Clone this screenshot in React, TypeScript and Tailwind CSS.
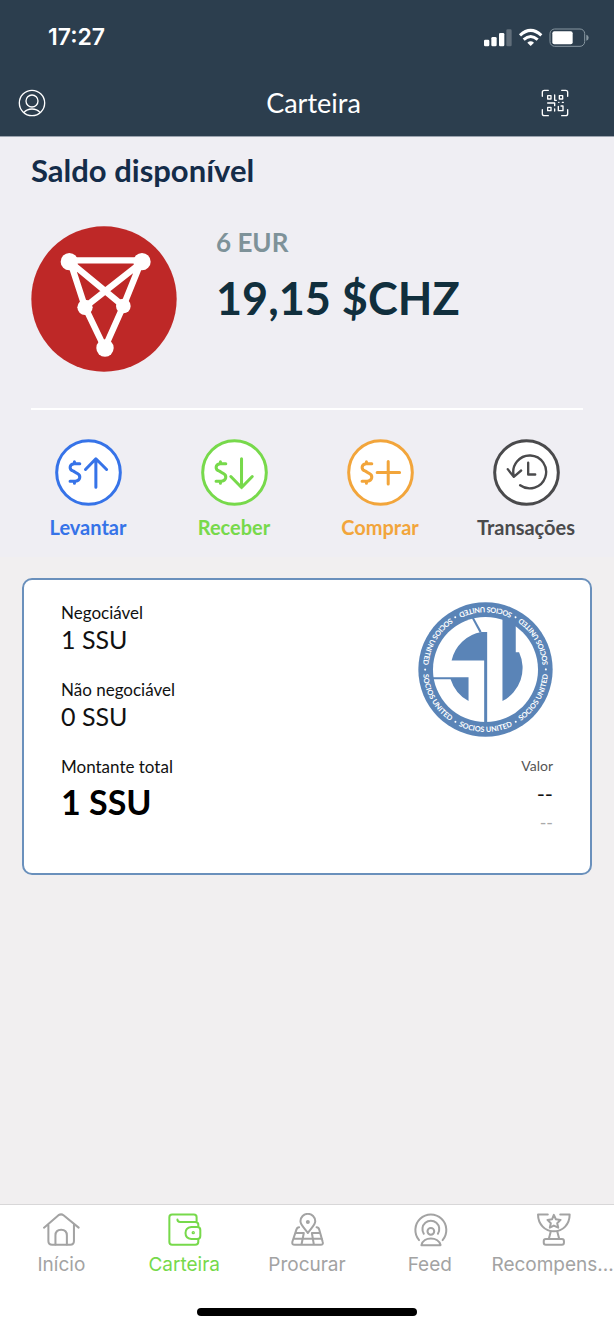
import type { ReactNode } from "react";

const icon = {
  fill: "none",
  stroke: "currentColor",
  strokeLinecap: "round" as const,
  strokeLinejoin: "round" as const,
};

function StatusIcons() {
  return (
    <svg className="h-5 w-[105px]" viewBox="0 0 315 60" aria-hidden="true">
      <g fill="#fff">
        <rect x="0" y="38" width="16" height="20" rx="4" />
        <rect x="22" y="30" width="16" height="28" rx="4" />
        <rect x="45" y="18" width="16" height="40" rx="4" />
        <rect x="67" y="7" width="16" height="51" rx="4" opacity="0.25" />
        <path d="M140 57 L130 47 Q140 39 150 47 Z" />
        <rect x="205" y="13" width="61" height="39" rx="6" />
      </g>
      <g fill="none" stroke="#fff" strokeWidth="9">
        <path d="M108 25 Q140 -5 172 25" />
        <path d="M119 38 Q140 19 161 38" />
      </g>
      <rect x="198" y="6" width="104" height="52" rx="14" fill="none" stroke="#8796a0" strokeWidth="3" />
      <path d="M307 23 Q314 25 314 32 Q314 39 307 41 Z" fill="#8796a0" />
    </svg>
  );
}

function ProfileIcon() {
  return (
    <svg className="size-7" viewBox="0 0 84 84" {...icon} strokeWidth="4">
      <circle cx="42" cy="42" r="38" />
      <circle cx="42" cy="36" r="18" />
      <path d="M18 70 Q27 60 42 60 Q57 60 66 70" />
    </svg>
  );
}

function QrIcon() {
  return (
    <svg className="size-7" viewBox="0 0 84 84" {...icon} strokeWidth="4">
      <path d="M4 22 V10 Q4 4 10 4 H22 M62 4 H74 Q80 4 80 10 V22 M80 62 V74 Q80 80 74 80 H62 M22 80 H10 Q4 80 4 74 V62" />
      <path d="M20 20 H30 V30 H20 Z M55 20 H65 V30 H55 Z M20 55 H30 V65 H20 Z" />
      <path d="M41 18 V34 H46 M20 42 H41 V50 M53 40 H54 M64 40 H67 M41 60 V66 M52 52 V65 H66 V51 H60" />
    </svg>
  );
}

function ChilizLogo() {
  return (
    <svg className="w-[146px] shrink-0" viewBox="93 49 438 438" role="img" aria-label="Chiliz">
      <circle cx="312" cy="268" r="218" fill="#be2827" />
      <path
        d="M208 152 H427 M212 160 L255 292 L314 415 L370 289 L422 160 M216 162 L370 289 M420 162 L255 292"
        fill="none"
        stroke="#fff"
        strokeWidth="19"
      />
      <g fill="#fff">
        <circle cx="208" cy="156" r="26" />
        <circle cx="426" cy="156" r="26" />
        <circle cx="255" cy="293" r="23" />
        <circle cx="370" cy="289" r="22" />
        <circle cx="315" cy="415" r="26" />
      </g>
    </svg>
  );
}

const dollar = "M74 74 H57 C42 76 41 91 55 96 L65 102 C79 108 76 124 61 126 H45 M58 68 V74 M58 126 V132";

function ActionIcon({ children }: { children: ReactNode }) {
  return (
    <svg className="size-[67px]" viewBox="0 0 200 200" {...icon} strokeWidth="9">
      <circle cx="100" cy="100" r="95" fill="#fff" />
      {children}
    </svg>
  );
}

const actions = [
  {
    label: "Levantar",
    color: "text-[#3673e8]",
    drawing: <path d={dollar + " M122 144 V60 M91 91 L122 59 L154 91"} />,
  },
  {
    label: "Receber",
    color: "text-[#77d94b]",
    drawing: <path d={dollar + " M121 59 V144 M89 112 L121 145 L153 112"} />,
  },
  {
    label: "Comprar",
    color: "text-[#f2a53b]",
    drawing: <path d={dollar + " M123 67 V134 M90 100 H157"} />,
  },
  {
    label: "Transações",
    color: "text-[#4a4a4c]",
    drawing: <path strokeWidth="7" d="M62 110 A49 49 0 1 1 81 138 M44 90 L62 113 L84 94 M105 71 V106 H126" />,
  },
];

function SociosLogo() {
  return (
    <svg className="w-[135px]" viewBox="-203 -203 406 406" role="img" aria-label="Socios United">
      <defs>
        <path id="ring" d="M-188 0 A188 188 0 0 0 188 0" />
      </defs>
      <circle r="202" fill="#5a84b7" />
      <circle r="158" fill="#fff" />
      <g fill="#5a84b7">
        <path d="M-102 -27 A111 111 0 0 1 -12 -113 H5 V160 H-4 V-27 Z" />
        <path d="M-41 -154 L-35 -156 L-12 -114 L-17 -110 Z" />
        <path d="M-160 23 H-51 V95 A116 116 0 0 1 -105 29 H-160 Z" />
        <path d="M51 -160 H91 V-52 H101 A112 112 0 0 1 51 95 Z" />
      </g>
      {[0, 60, 120, 180, 240, 300].map((angle) => (
        <g key={angle} transform={`rotate(${angle})`} fill="#fff">
          <text fontFamily="Lato, sans-serif" fontWeight="700" fontSize="22" textAnchor="middle">
            <textPath href="#ring" startOffset="50%">SOCIOS UNITED</textPath>
          </text>
          <circle cx="91" cy="157" r="3" />
        </g>
      ))}
    </svg>
  );
}

function HomeIcon() {
  return (
    <>
      <path d="M0 43 L43 6 Q51 1 58 6 L103 43 M13 35 V83 Q13 94 24 94 H78 Q89 94 89 83 V35" />
      <path d="M34 93 V66 Q34 49 51 49 Q68 49 68 66 V93" />
    </>
  );
}

function WalletIcon() {
  return (
    <>
      <path d="M31 19 Q31 26 39 26 H84 Q93 26 93 34 V39 M93 77 V86 Q93 94 84 94 H15 Q7 94 7 86 V12 Q7 4 15 4 H80 Q88 4 88 12 V24" />
      <path d="M72 41 H90 Q99 41 99 50 V68 Q99 77 90 77 H72 Q55 75 55 59 Q55 43 72 41 Z" />
      <circle cx="78" cy="58" r="2" />
    </>
  );
}

function MapIcon() {
  return (
    <>
      <path d="M56 59 C47 45 34 35 34 24 A21 21 0 0 1 78 24 C78 35 65 45 56 59 Z" />
      <circle cx="56" cy="26" r="3" />
      <path d="M30 42 Q24 42 22 49 L10 85 Q8 94 17 94 H94 Q103 94 100 85 L90 49 Q88 42 82 42 M20 59 H44 M68 59 H92 M14 76 H98 M44 59 L37 94 M68 59 L74 94" />
    </>
  );
}

function FeedIcon() {
  return (
    <>
      <path d="M21 80 A46 46 0 1 1 91 80" />
      <path d="M35 61 A25 25 0 1 1 77 61" />
      <circle cx="56" cy="54" r="10" />
      <path d="M28 95 C34 69 78 69 85 95 Z" />
    </>
  );
}

function TrophyIcon() {
  return (
    <>
      <path d="M38 4 H9 C9 33 30 54 56 54 C83 54 103 33 103 4 H75" />
      <path d="M56 5 L62 18 L76 20 L66 30 L69 43 L56 37 L44 43 L47 30 L37 20 L51 18 Z" />
      <path d="M47 54 L41 77 M66 54 L72 77" />
      <rect x="26" y="77" width="60" height="17" rx="6" />
    </>
  );
}

const tabs = [
  { label: "Início", drawing: <HomeIcon />, active: false },
  { label: "Carteira", drawing: <WalletIcon />, active: true },
  { label: "Procurar", drawing: <MapIcon />, active: false },
  { label: "Feed", drawing: <FeedIcon />, active: false },
  { label: "Recompens...", drawing: <TrophyIcon />, active: false },
];

export default function App() {
  return (
    <div className="flex min-h-screen flex-col bg-[#f1eff0] font-['Lato',sans-serif]">
      <header className="border-b border-[#9ba3ae] bg-[#2c3e4e] text-white">
        <div className="flex h-[74px] items-center justify-between pr-[25px] pl-12">
          <time className="font-['Inter',sans-serif] text-[23px] font-semibold">17:27</time>
          <StatusIcons />
        </div>
        <div className="grid h-[62px] grid-cols-[1fr_auto_1fr] items-center pr-[45px] pb-1 pl-[18px]">
          <button className="justify-self-start" aria-label="Perfil"><ProfileIcon /></button>
          <h1 className="pl-10 text-[27px] leading-8">Carteira</h1>
          <button className="justify-self-end" aria-label="Ler código QR"><QrIcon /></button>
        </div>
      </header>

      <main className="grow">
        <section className="bg-[#efeef3] pb-4">
          <div className="mx-[31px] border-b-2 border-white pt-[15px] pb-9">
            <h2 className="text-[31px] leading-9 font-bold text-[#142c49]">Saldo disponível</h2>
            <div className="mt-[38px] flex gap-[39px]">
              <ChilizLogo />
              <div>
                <p className="text-[26px] leading-8 font-bold text-[#7e9299]">6 EUR</p>
                <p className="mt-3 text-[45px] leading-[56px] font-bold text-[#112f3d]">19,15 $CHZ</p>
              </div>
            </div>
          </div>
          <div className="mt-[29px] grid grid-cols-4 px-[15px]">
            {actions.map((action) => (
              <button key={action.label} className={`flex flex-col items-center gap-[7px] ${action.color}`}>
                <ActionIcon>{action.drawing}</ActionIcon>
                <span className="text-xl leading-7 font-bold">{action.label}</span>
              </button>
            ))}
          </div>
        </section>

        <article className="mx-[22px] mt-[21px] flex min-h-[297px] justify-between rounded-[10px] border-2 border-[#6a90bc] bg-white px-[37px] pt-[22px] pb-9 text-[#111]">
          <dl className="flex flex-col gap-[25px]">
            <div>
              <dt className="text-[17px] leading-[22px]">Negociável</dt>
              <dd className="text-[25px] leading-[30px]">1 SSU</dd>
            </div>
            <div>
              <dt className="text-[17px] leading-[22px]">Não negociável</dt>
              <dd className="text-[25px] leading-[30px]">0 SSU</dd>
            </div>
            <div>
              <dt className="text-[17px] leading-[22px]">Montante total</dt>
              <dd className="mt-1 text-[34px] leading-10 font-bold text-black">1 SSU</dd>
            </div>
          </dl>
          <div className="flex flex-col items-end">
            <SociosLogo />
            <p className="mt-[19px] text-sm leading-5 text-[#555]">Valor</p>
            <p className="mt-1 text-[22px] leading-7">--</p>
            <p className="text-lg leading-7 text-[#aaa]">--</p>
          </div>
        </article>
      </main>

      <footer className="border-t border-[#d8d7d8] bg-white">
        <nav className="grid grid-cols-5 font-['Inter',sans-serif]">
          {tabs.map((tab) => (
            <a
              key={tab.label}
              href="#"
              aria-current={tab.active ? "page" : undefined}
              className={`flex min-w-0 flex-col items-center gap-1.5 pt-2 ${tab.active ? "text-[#77d94b]" : "text-[#a3a3a3]"}`}
            >
              <svg className="h-[34px] w-[37px]" viewBox="-3 0 110 100" {...icon} strokeWidth="6" aria-hidden="true">
                {tab.drawing}
              </svg>
              <span className="text-[19px] leading-6 whitespace-nowrap">{tab.label}</span>
            </a>
          ))}
        </nav>
        <div className="flex h-[51px] items-end justify-center pb-3">
          <div className="h-2 w-[220px] rounded-full bg-black" />
        </div>
      </footer>
    </div>
  );
}
